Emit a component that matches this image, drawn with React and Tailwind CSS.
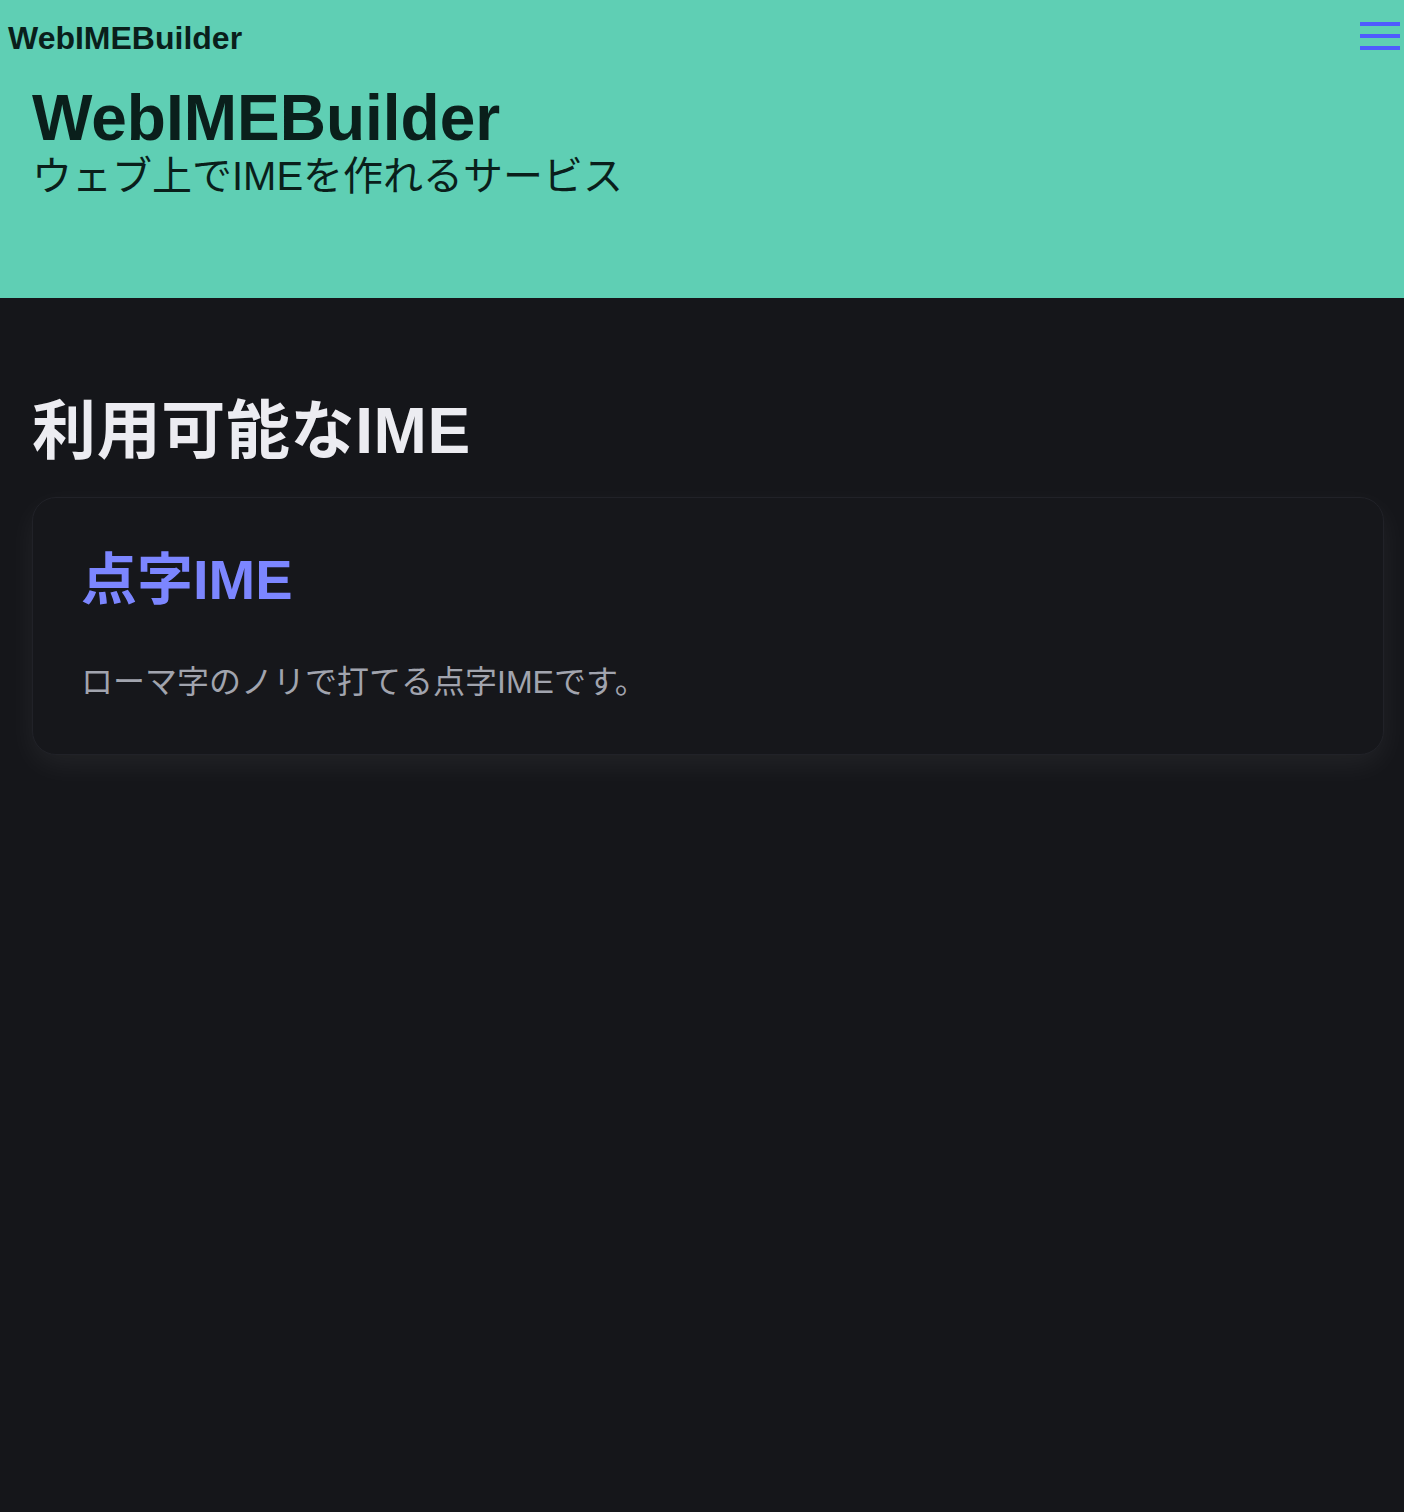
import React from 'react';

const font = { fontFamily: '"Liberation Sans", "Noto Sans CJK JP", sans-serif' };

const imes = [
  { id: 'braille', name: '点字IME', description: 'ローマ字のノリで打てる点字IMEです。' },
];

const MenuIcon = () => (
  <button className="mt-[3px] flex w-10 flex-col gap-2" aria-label="menu">
    <span className="block h-1 w-10 bg-[#4f5bff]" />
    <span className="block h-1 w-10 bg-[#4f5bff]" />
    <span className="block h-1 w-10 bg-[#4f5bff]" />
  </button>
);

const ImeCard = ({ ime }) => (
  <div className="rounded-[24px] border border-[#212228] bg-[#16171b] px-12 pt-12 pb-12 shadow-[0_10px_30px_rgba(255,255,255,0.06)]">
    <h3 className="text-[56px] font-bold leading-[1.2] text-[#7c86ff]">{ime.name}</h3>
    <p className="mt-[45px] text-[32px] leading-[48px] text-[#a1a4ae]">{ime.description}</p>
  </div>
);

export default function App() {
  return (
    <div className="min-h-[1512px] bg-[#15161a]" style={font}>
      {/* Header + hero */}
      <header className="h-[298px] bg-[#5fcfb4] text-[#0a1f1b]">
        <nav className="flex items-start justify-between pl-2 pr-1 pt-[19px]">
          <span className="text-[32px] font-bold leading-[38px]">WebIMEBuilder</span>
          <MenuIcon />
        </nav>
        <div className="px-8 pt-[29px]">
          <h1 className="text-[64px] font-bold leading-[64px]">WebIMEBuilder</h1>
          <p className="mt-[6px] text-[40px] leading-[40px]">ウェブ上でIMEを作れるサービス</p>
        </div>
      </header>

      {/* IME list */}
      <main className="pl-8 pr-5 pt-[101px]">
        <h2 className="text-[64px] font-bold leading-[64px] tracking-[0.01em] text-[#ececf1]">利用可能なIME</h2>
        <div className="mt-[34px] flex flex-col gap-8">
          {imes.map((ime) => (
            <ImeCard key={ime.id} ime={ime} />
          ))}
        </div>
      </main>
    </div>
  );
}
